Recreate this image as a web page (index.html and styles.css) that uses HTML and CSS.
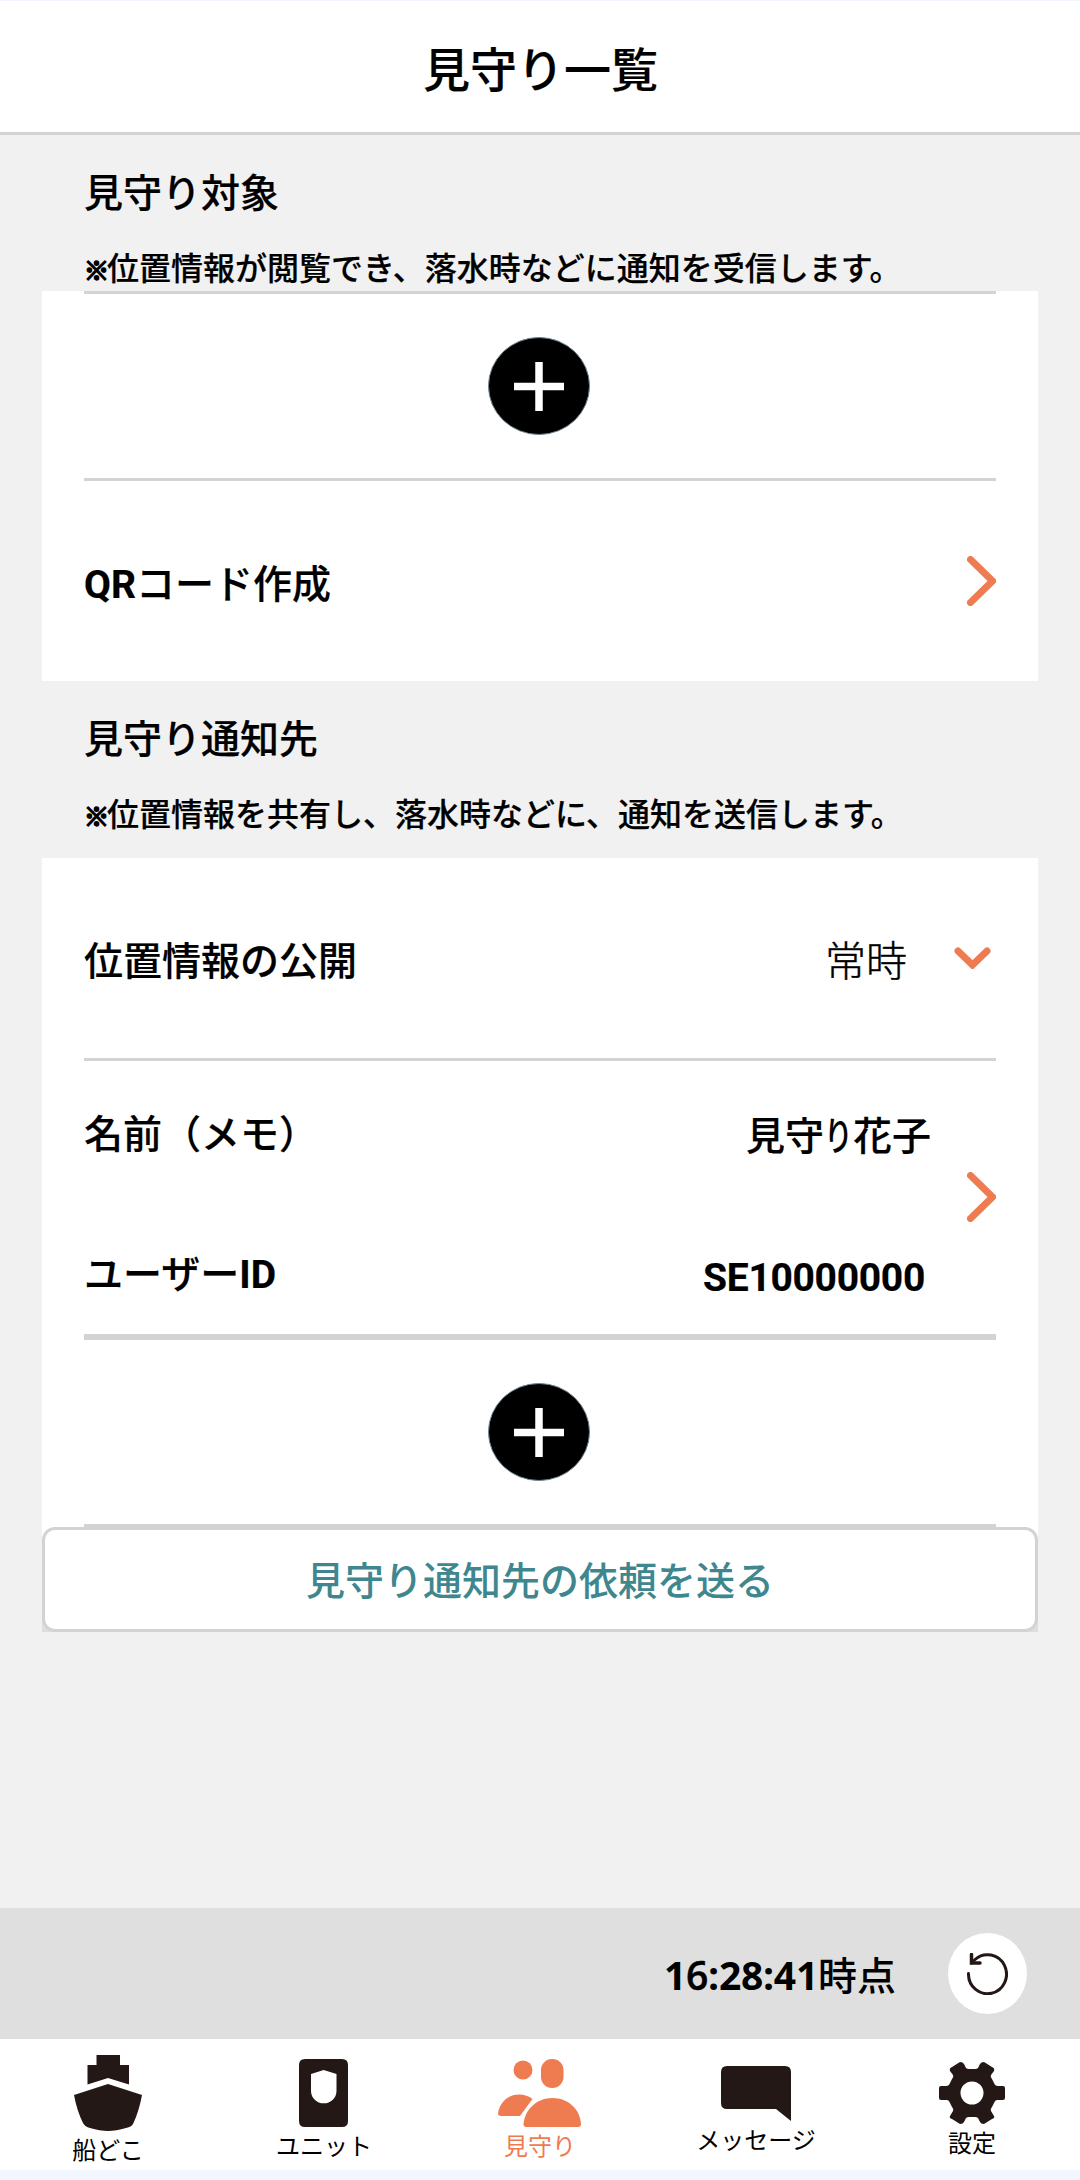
FILE: index.html
```html
<!DOCTYPE html>
<html lang="ja">
<head>
    <meta charset="UTF-8">
    <title>見守り一覧</title>
    <link rel="stylesheet" href="styles.css">
</head>
<body>
<div id="app">
    <header class="header">
        <h1>見守り一覧</h1>
    </header>
    <main class="main">
        <!-- 見守り対象 -->
        <div class="section-head">
            <h2>見守り対象</h2>
            <p><span class="mark">※</span>位置情報が閲覧でき、落水時などに通知を受信します。</p>
        </div>
        <div class="card">
            <div class="add-row first">
                <svg class="plus" viewBox="0 0 102 98"><ellipse cx="51" cy="49" rx="50.500" ry="48.500" fill="#000" stroke="#6f8794"/><path d="M26 49.500H76M51 25V74" stroke="#fff" stroke-width="7.500"/></svg>
            </div>
            <div class="row qr">
                <span class="label"><b>QR</b>コード作成</span>
                <svg class="arrow" viewBox="0 0 29 50"><path d="M3.500 3.500L25.500 25L3.500 46.500" /></svg>
            </div>
        </div>

        <!-- 見守り通知先 -->
        <div class="section-head second">
            <h2>見守り通知先</h2>
            <p><span class="mark">※</span>位置情報を共有し、落水時などに、通知を送信します。</p>
        </div>
        <div class="card">
            <div class="row open">
                <span class="label">位置情報の公開</span>
                <span class="select">常時</span>
                <svg class="down" viewBox="0 0 37 22"><path d="M4 4L18.500 18L33 4" /></svg>
            </div>
            <div class="row user">
                <dl>
                    <div>
                        <dt>名前（メモ）</dt>
                        <dd class="name">見守<span>り</span>花子</dd>
                    </div>
                    <div>
                        <dt>ユーザー<b>ID</b></dt>
                        <dd class="uid">SE10000000</dd>
                    </div>
                </dl>
                <svg class="arrow" viewBox="0 0 29 50"><path d="M3.500 3.500L25.500 25L3.500 46.500" /></svg>
            </div>
            <div class="add-row last">
                <svg class="plus" viewBox="0 0 102 98"><ellipse cx="51" cy="49" rx="50.500" ry="48.500" fill="#000" stroke="#6f8794"/><path d="M26 49.500H76M51 25V74" stroke="#fff" stroke-width="7.500"/></svg>
            </div>
            <div class="send-wrap">
                <button class="send">見守り通知先の依頼を送る</button>
            </div>
        </div>
    </main>

    <div class="status">
        <span class="time"><b>1<i>6</i>:28:41</b>時点</span>
        <button class="reload">
            <svg viewBox="0 0 41 42"><path d="M1.500 20.500A19 19.500 0 1 0 8 6.500L4.500 10" /><path class="head" d="M4.500 1.500V10H13" /></svg>
        </button>
    </div>

    <nav class="tabs">
        <a class="tab boat">
            <svg viewBox="0 0 68 76"><path d="M22.500 0H46V10H55V29.500L34 23L13.500 29.500V10H22.500Z"/><path d="M34 29L68 40Q65 56 59.500 68Q58 72 52 73Q42 76 34 76Q26 76 16 73Q11 72 9 68Q3 56 0 40Z"/></svg>
            <span>船どこ</span>
        </a>
        <a class="tab unit">
            <svg viewBox="0 0 49 68"><path fill-rule="evenodd" d="M6 0H43Q49 0 49 6V62Q49 68 43 68H6Q0 68 0 62V6Q0 0 6 0ZM12 15V32A12.700 12.300 0 0 0 37.500 32V15L24.700 11Z"/></svg>
            <span>ユニット</span>
        </a>
        <a class="tab watch active">
            <svg viewBox="0 0 83 68"><circle cx="25" cy="11" r="9.500"/><rect x="43" width="22.500" height="29" rx="11"/><path d="M3 57Q0 57 0 54C2 43 10 35.500 21 35.500Q29 35.500 34.500 40L22 57Z"/><path d="M28 68Q25.500 68 25.500 65C27 50 39 39 54.500 39S82 50 83 65Q83 68 80 68Z"/></svg>
            <span>見守り</span>
        </a>
        <a class="tab message">
            <svg viewBox="0 0 70 55"><path d="M6 0H64Q70 0 70 6V55L55 43H6Q0 43 0 37V6Q0 0 6 0Z"/></svg>
            <span>メッセージ</span>
        </a>
        <a class="tab setting">
            <svg viewBox="0 0 66 62"><path fill-rule="evenodd" d="M21 0Q24 0 25 2L27 6Q28 7 30 7H36Q38 7 39 6L41 2Q42 0 45 0L53 5Q56 6 55 9L52 13Q51 15 53 17L55 21Q56 24 58 24H64Q66 24 66 26V36Q66 38 64 38H58Q56 38 55 41L53 45Q51 47 52 49L55 54Q56 56 53 57L45 62Q42 62 41 60L39 56Q38 55 36 55H30Q28 55 27 56L25 60Q24 62 21 62L13 57Q10 56 11 54L14 49Q15 47 13 45L11 41Q10 38 8 38H2Q0 38 0 36V26Q0 24 2 24H8Q10 24 11 21L13 17Q15 15 14 13L11 9Q10 6 13 5ZM33 19.500A11.500 11.500 0 1 0 33 42.500A11.500 11.500 0 1 0 33 19.500Z"/></svg>
            <span>設定</span>
        </a>
    </nav>
</div>
</body>
</html>
```
FILE: styles.css
```css
*{margin:0;padding:0;box-sizing:border-box;}
body{
    background: #f1f1f1;
    color: #000;
    font-family: Roboto,"Noto Sans CJK JP",sans-serif;
}
svg{display: block;flex: none;}
#app{
    width: 1080px;
    height: 2180px;
    display: flex;
    flex-direction: column;
    border-top: 1px solid #f2f6fe;
    border-bottom: 10px solid #f2f6fe;
    overflow: hidden;
}
h1,h2,p,dt,dd,.label{
    -webkit-text-stroke: .2px;
}
.header{
    height: 134px;
    padding: 36px 0 0 1px;
    background: #fff;
    border-bottom: 3px solid #d3d3d3;
    text-align: center;
}
.header h1{
    font-size: 47px;
    line-height: 68px;
    font-weight: 500;
}
.main{
    flex: 1;
    padding: 0 42px;
}
.section-head{
    height: 156px;
    padding: 29px 42px 0;
}
.section-head h2{
    font-size: 39px;
    line-height: 60px;
    font-weight: 500;
}
.section-head p{
    margin-top: 22px;
    font-size: 32px;
    line-height: 46px;
    font-weight: 500;
    white-space: nowrap;
}
.section-head .mark{
    display: inline-block;
    width: 23px;
    font-size: 25px;
    font-weight: 700;
    -webkit-text-stroke: 1.8px;
}
.section-head.second{
    height: 177px;
}
.card{
    background: #fff;
}
.add-row{
    margin: 0 42px;
    border-bottom: 3px solid #d3d3d3;
}
.add-row .plus{
    width: 102px;
    height: 98px;
    margin: 0 0 0 404px;
}
.add-row.first{
    height: 190px;
    padding-top: 43px;
    border-top: 3px solid #d3d3d3;
}
.add-row.last{
    height: 187px;
    padding-top: 43px;
}
.row{
    display: flex;
    align-items: center;
    margin: 0 42px;
}
.label,
.row dt{
    flex: 1;
    font-size: 39px;
    line-height: 60px;
    font-weight: 500;
}
.label{padding-top: 7px;}
.label b,
.row dt b{
    font-weight: 700;
}
.row.qr{
    height: 200px;
}
.arrow{
    width: 29px;
    height: 50px;
}
.arrow path,
.down path{
    fill: none;
    stroke: #ef7b51;
    stroke-width: 7;
    stroke-linecap: round;
}
.row.open{
    height: 203px;
    border-bottom: 3px solid #d3d3d3;
}
.select{
    margin-right: 47px;
    font-size: 41px;
    line-height: 60px;
    font-weight: 300;
    font-family: "Noto Sans CJK JP",sans-serif;
    -webkit-text-stroke: .4px;
}
.down{
    width: 37px;
    height: 22px;
    margin-right: 5px;
}
.row.user{
    height: 279px;
    border-bottom: 6px solid #d3d3d3;
}
.row.user .arrow{
    margin-bottom: 2px;
}
.row.user dl{
    flex: 1;
    padding-top: 14px;
}
.row.user dl div{
    display: flex;
    align-items: center;
    height: 140px;
}
.row.user dd{
    margin-right: 36px;
    padding-top: 5px;
    font-size: 39px;
    line-height: 60px;
    font-weight: 500;
}
.row.user .name span{
    display: inline-block;
    width: 29px;
    transform: scaleX(.74);
    transform-origin: 0 50%;
}
.row.user .uid{
    margin-right: 42px;
    padding-top: 6px;
    font-weight: 700;
    letter-spacing: -.3px;
}
.send-wrap{
    background: linear-gradient(#fff 50%,#dedede 50%);
}
.send{
    display: block;
    width: 100%;
    height: 105px;
    padding-bottom: 3px;
    background: #fff;
    border: 3px solid #d3d3d3;
    border-radius: 13px;
    color: #3f878f;
    font-family: inherit;
    font-size: 39px;
    font-weight: 500;
}
.status{
    display: flex;
    align-items: center;
    justify-content: flex-end;
    height: 131px;
    padding-right: 53px;
    background: #dfdfdf;
}
.time{
    margin-right: 52px;
    padding-top: 4px;
    font-size: 39px;
    font-weight: 500;
    line-height: 60px;
}
.time b{
    font-family: "Open Sans","Noto Sans",sans-serif;
    font-weight: 700;
    letter-spacing: -.25px;
}
.time i{
    font-style: normal;
    font-weight: 600;
    -webkit-text-stroke: .5px;
}
.reload{
    display: flex;
    align-items: center;
    justify-content: center;
    width: 79px;
    height: 81px;
    background: #fff;
    border: none;
    border-radius: 50%;
}
.reload svg{
    width: 41px;
    height: 42px;
}
.reload path{
    fill: none;
    stroke: #231815;
    stroke-width: 3;
    stroke-linecap: round;
}
.reload .head{stroke-width: 3.5;}
.tabs{
    display: flex;
    height: 131px;
    background: #fff;
}
.tab{
    display: flex;
    flex-direction: column;
    align-items: center;
    width: 216px;
    padding-top: 20px;
    font-size: 24px;
    line-height: 30px;
}
.tab svg{fill: #231815;}
.boat{padding-top: 16px;}
.boat svg{width: 68px;height: 76px;margin-bottom: 5px;}
.unit svg{width: 49px;height: 68px;margin: 0 1px 5px 0;}
.watch svg{width: 83px;height: 68px;margin: 0 2px 5px 0;}
.message{padding-top: 27px;}
.message svg{width: 70px;height: 55px;margin-bottom: 5px;}
.setting{padding-top: 23px;}
.setting svg{width: 66px;height: 62px;margin-bottom: 5px;}
.active{color: #ef7b51;}
.active svg{fill: #ef7b51;}
```
